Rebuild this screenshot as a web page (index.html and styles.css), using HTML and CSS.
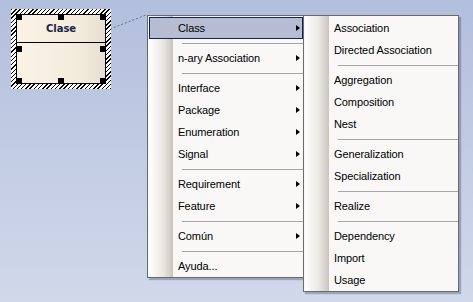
FILE: index.html
```html
<!DOCTYPE html>
<html>
<head>
    <title>Diagram context menu</title>
    <link rel="stylesheet" href="styles.css">
</head>
<body>
    <div class="desk">
        <svg class="link" width="473" height="302">
            <line x1="110" y1="29" x2="146" y2="15" stroke="#6a7088" stroke-width="1" stroke-dasharray="2 2"/>
        </svg>

        <div class="element">
            <div class="box">
                <div class="name">Clase</div>
                <div class="attrs"></div>
            </div>
            <span class="grip g-tl"></span>
            <span class="grip g-tm"></span>
            <span class="grip g-tr"></span>
            <span class="grip g-ml"></span>
            <span class="grip g-mr"></span>
            <span class="grip g-bl"></span>
            <span class="grip g-bm"></span>
            <span class="grip g-br"></span>
        </div>

        <ul class="menu main">
            <li class="item hot sub">Class</li>
            <li class="sep"></li>
            <li class="item sub">n-ary Association</li>
            <li class="sep"></li>
            <li class="item sub">Interface</li>
            <li class="item sub">Package</li>
            <li class="item sub">Enumeration</li>
            <li class="item sub">Signal</li>
            <li class="sep"></li>
            <li class="item sub">Requirement</li>
            <li class="item sub">Feature</li>
            <li class="sep"></li>
            <li class="item sub">Común</li>
            <li class="sep"></li>
            <li class="item">Ayuda...</li>
        </ul>

        <ul class="menu side">
            <li class="item">Association</li>
            <li class="item">Directed Association</li>
            <li class="sep"></li>
            <li class="item">Aggregation</li>
            <li class="item">Composition</li>
            <li class="item">Nest</li>
            <li class="sep"></li>
            <li class="item">Generalization</li>
            <li class="item">Specialization</li>
            <li class="sep"></li>
            <li class="item">Realize</li>
            <li class="sep"></li>
            <li class="item">Dependency</li>
            <li class="item">Import</li>
            <li class="item">Usage</li>
        </ul>
    </div>
</body>
</html>
```

FILE: styles.css
```css
body {
    margin: 0;
    font-family: "Liberation Sans", Arial, sans-serif;
    font-size: 11px;
}
.desk {
    position: relative;
    width: 473px;
    height: 302px;
    overflow: hidden;
    background: linear-gradient(to bottom, #b2bfdd, #d1d8ea);
}
.link {
    position: absolute;
    left: 0;
    top: 0;
}

/* diagram element */
.element {
    position: absolute;
    left: 11px;
    top: 9px;
    width: 100px;
    height: 80px;
    padding: 5px;
    box-sizing: border-box;
    background: repeating-linear-gradient(-45deg, #000 0 1px, #fff 1px 3px);
}
.box {
    display: flex;
    flex-direction: column;
    height: 100%;
    border: 1px solid #000;
    box-sizing: border-box;
    background: linear-gradient(to right, #faf2e5, #f3ebdc 70%, #e6ded0);
}
.name {
    height: 27px;
    border-bottom: 1px solid #000;
    display: flex;
    align-items: center;
    justify-content: center;
    font-family: "DejaVu Sans", sans-serif;
    font-weight: bold;
    font-size: 10px;
    color: #1c2448;
}
.attrs {
    flex: 1;
}
.grip {
    position: absolute;
    width: 6px;
    height: 6px;
    background: #000;
}
.g-tl { left: 5px; top: 5px; }
.g-tm { left: 47px; top: 5px; }
.g-tr { left: 89px; top: 5px; }
.g-ml { left: 5px; top: 37px; }
.g-mr { left: 89px; top: 37px; }
.g-bl { left: 5px; top: 69px; }
.g-bm { left: 47px; top: 69px; }
.g-br { left: 89px; top: 69px; }

/* menus */
.menu {
    position: absolute;
    list-style: none;
    margin: 0;
    padding: 1px 0 0 1px;
    border: 1px solid #6b6b6b;
    box-shadow: 2px 2px 1px rgba(60, 70, 100, 0.35);
    background:
        linear-gradient(to right, #fefefe, #eceae5 55%, #c9c5bd) 1px 0 / 24px 100% no-repeat,
        #f9f8f7;
    color: #000;
}
.main {
    left: 147px;
    top: 15px;
    width: 154px;
}
.side {
    left: 303px;
    top: 15px;
    width: 153px;
}
.item {
    display: flex;
    align-items: center;
    height: 22px;
    padding-left: 29px;
    position: relative;
    white-space: nowrap;
    letter-spacing: -0.1px;
}
.item.hot {
    background: #b6bdd2;
    outline: 1px solid #0a246a;
    outline-offset: -1px;
}
.item.sub::after {
    content: "";
    position: absolute;
    right: 3px;
    top: 8px;
    border-left: 4px solid #000;
    border-top: 3.5px solid transparent;
    border-bottom: 3.5px solid transparent;
}
.sep {
    height: 8px;
    display: flex;
    align-items: center;
    margin-left: 33px;
}
.sep::before {
    content: "";
    flex: 1;
    height: 1px;
    background: #a6a6a6;
}
```
